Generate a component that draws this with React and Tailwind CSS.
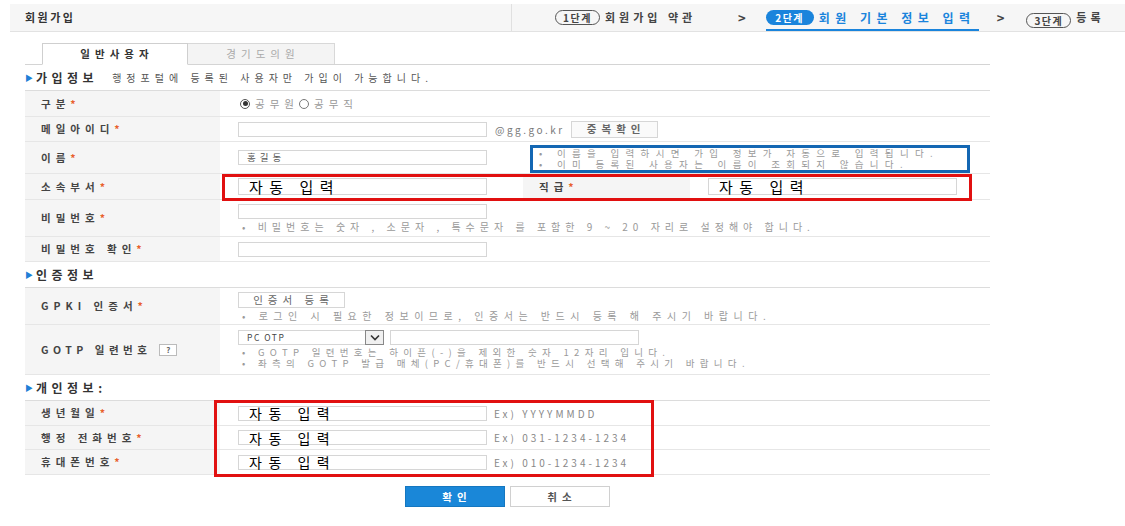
import React from "react";

const F = { fontFamily: '"Noto Sans CJK KR", "Noto Sans", sans-serif' };

function Star() {
  return <span className="text-[#e8602c] tracking-normal">*</span>;
}

function Label({ children, star = true }) {
  return (
    <div className="w-[195px] shrink-0 bg-[#f5f5f5] flex items-center pl-[16px] text-[10.5px] font-bold text-[#444] tracking-[5px]">
      <span>
        {children}
        {star && <Star />}
      </span>
    </div>
  );
}

function Input({ w = "w-[249px]", children }) {
  return (
    <div className={`${w} h-[15px] border border-[#d6d6d6] bg-white flex items-center pl-[8px] text-[9.5px] text-[#555] tracking-[4px]`}>
      {children}
    </div>
  );
}

function BigInput({ size = "text-[15px]", h = "h-[17px]", w = "w-[249px]" }) {
  return (
    <div className={`${w} ${h} border border-[#d6d6d6] bg-white flex items-center pl-[10px] ${size} text-black tracking-[6.5px] leading-none`}>
      자동 입력
    </div>
  );
}

function Hint({ children, t = "tracking-[5px]", s = "text-[10px]" }) {
  return <div className={`${s} text-[#9a9a9a] ${t} leading-[11px] whitespace-nowrap`}>• {children}</div>;
}

function Row({ h, label, star = true, children }) {
  return (
    <div className={`flex border-b border-[#e6e6e6] ${h}`}>
      <Label star={star}>{label}</Label>
      <div className="flex-1 pl-[18px] flex flex-col justify-center">{children}</div>
    </div>
  );
}

function SectionHead({ title, desc }) {
  return (
    <div className="h-[25px] flex items-center">
      <span className="text-[#1f7fd6] text-[8px] mr-[3px]">▶</span>
      <span className="text-[12px] font-bold text-[#333] tracking-[4.5px]">{title}</span>
      {desc && <span className="ml-[14px] text-[10px] text-[#555] tracking-[5px]">{desc}</span>}
    </div>
  );
}

function StepPill({ n, active }) {
  return active ? (
    <span className="inline-flex items-center justify-center w-[48px] h-[15px] rounded-full bg-[#1a84dc] text-white text-[10px] font-bold tracking-[1.5px]">{n}단계</span>
  ) : (
    <span className="inline-flex items-center justify-center w-[45px] h-[15px] rounded-full border border-[#555] text-[#444] text-[10px] font-bold tracking-[1.5px]">{n}단계</span>
  );
}

function Ex({ children }) {
  return <span className="ml-[7px] text-[10px] text-[#888] tracking-[3px]">{children}</span>;
}

export default function App() {
  return (
    <div style={F} className="w-[1125px] h-[526px] bg-white overflow-hidden relative">
      {/* header */}
      <div className="mt-[4px] ml-[10px] h-[28px] bg-[#f6f6f6] border-b border-[#e2e2e2] flex">
        <div className="w-[502px] border-r border-[#e0e0e0] flex items-center pl-[15px] text-[11px] font-bold text-[#333] tracking-[2.5px]">회원가입</div>
        <div className="flex-1 flex items-center pl-[43px] whitespace-nowrap">
          <StepPill n="1" />
          <span className="ml-[5px] w-[90px] text-[11px] font-bold text-[#444] tracking-[4px]">회원가입 약관</span>
          <span className="ml-[43px] text-[13px] font-bold text-[#444]">&gt;</span>
          <div className="ml-[20px] h-full flex items-center border-b-2 border-[#1a84dc] pt-[2px]">
            <StepPill n="2" active />
            <span className="ml-[5px] w-[160px] text-[12px] font-bold text-[#1a84dc] tracking-[5.5px]">회원 기본 정보 입력</span>
          </div>
          <span className="ml-[18px] text-[13px] font-bold text-[#444]">&gt;</span>
          <span className="ml-[22px]"><StepPill n="3" /></span>
          <span className="ml-[5px] text-[11px] font-bold text-[#444] tracking-[4px]">등록</span>
        </div>
      </div>

      <div className="ml-[25px] w-[965px]">
        {/* tabs */}
        <div className="mt-[11px] h-[22px] flex pl-[17px] border-b border-[#d4d4d4]">
          <div className="w-[146px] h-[22px] border border-[#cfcfcf] border-b-white bg-white flex items-center justify-center pl-[4px] text-[10.5px] font-bold text-[#333] tracking-[5px]">일반사용자</div>
          <div className="w-[147px] h-[21px] border-t border-r border-[#d8d8d8] bg-[#f4f4f4] flex items-center justify-center pl-[4px] text-[10.5px] text-[#aaa] tracking-[5px]">경기도의원</div>
        </div>

        <SectionHead title="가입정보" desc="행정포털에 등록된 사용자만 가입이 가능합니다." />
        <div className="border-t border-[#dcdcdc]">
          <Row h="h-[26px]" label="구분">
            <div className="flex items-center text-[10.5px] text-[#999] tracking-[5px]">
              <span className="w-[10px] h-[10px] rounded-full border border-[#555] flex items-center justify-center ml-[2px] mr-[5px]">
                <span className="w-[5px] h-[5px] rounded-full bg-[#333]" />
              </span>
              <span>공무원</span>
              <span className="w-[10px] h-[10px] rounded-full border border-[#777] mr-[5px]" />
              <span>공무직</span>
            </div>
          </Row>
          <Row h="h-[25px]" label="메일아이디">
            <div className="flex items-center">
              <Input />
              <span className="ml-[8px] text-[10px] text-[#777] tracking-[2.5px]">@gg.go.kr</span>
              <div className="ml-[6px] w-[87px] h-[17px] border border-[#d6d6d6] bg-[#fafafa] flex items-center justify-center pl-[4px] text-[10.5px] font-bold text-[#666] tracking-[5px]">중복확인</div>
            </div>
          </Row>
          <Row h="h-[32px]" label="이름">
            <div className="flex items-start h-full pt-[3px]">
              <div className="mt-[5px]"><Input>홍길동</Input></div>
              <div className="ml-[43px] w-[440px] h-[28px] border-[3px] border-[#1467b3] flex flex-col justify-center pl-[6px]">
                <Hint s="text-[9.5px]" t="tracking-[6.3px]">이름을 입력하시면 가입 정보가 자동으로 입력됩니다.</Hint>
                <Hint s="text-[9.5px]" t="tracking-[6.3px]">이미 등록된 사용자는 이름이 조회되지 않습니다.</Hint>
              </div>
            </div>
          </Row>
          <div className="relative flex border-b border-[#e6e6e6] h-[26px]">
            <Label>소속부서</Label>
            <div className="flex-1 pl-[18px] flex items-center">
              <BigInput />
              <div className="ml-[36px] w-[167px] h-full bg-[#f5f5f5] flex items-center pl-[16px] text-[10.5px] font-bold text-[#444] tracking-[5px]">
                <span>직급<Star /></span>
              </div>
              <div className="ml-[18px]"><BigInput /></div>
            </div>
            <div className="absolute left-[197px] top-0 w-[750px] h-[27px] border-[3px] border-[#e11010]" />
          </div>
          <Row h="h-[37px]" label="비밀번호">
            <Input />
            <div className="mt-[2px] pl-[4px]"><Hint>비밀번호는 숫자 , 소문자 , 특수문자 를 포함한 9 ~ 20 자리로 설정해야 합니다.</Hint></div>
          </Row>
          <Row h="h-[25px]" label="비밀번호 확인">
            <Input />
          </Row>
        </div>

        <SectionHead title="인증정보" />
        <div className="border-t border-[#dcdcdc]">
          <Row h="h-[37px]" label="GPKI 인증서">
            <div className="w-[107px] h-[16px] border border-[#d6d6d6] bg-white flex items-center justify-center pl-[4px] text-[10.5px] text-[#666] tracking-[5px]">인증서 등록</div>
            <div className="mt-[2px] pl-[4px]"><Hint t="tracking-[5.5px]">로그인 시 필요한 정보이므로, 인증서는 반드시 등록 해 주시기 바랍니다.</Hint></div>
          </Row>
          <div className="flex border-b border-[#e6e6e6] h-[50px]">
            <div className="w-[195px] shrink-0 bg-[#f5f5f5] flex items-center pl-[16px] text-[10.5px] font-bold text-[#444] tracking-[4.5px]">
              <span>GOTP 일련번호</span>
              <span className="ml-[8px] w-[18px] h-[12px] border border-[#bbb] bg-white flex items-center justify-center text-[8px] font-bold text-[#666] tracking-normal">?</span>
            </div>
            <div className="flex-1 pl-[18px] flex flex-col justify-center">
              <div className="flex items-center">
                <div className="w-[146px] h-[15px] border border-[#d6d6d6] bg-white flex items-center justify-between pl-[8px]">
                  <span className="text-[8.5px] text-[#444] tracking-[1.5px]">PC OTP</span>
                  <span className="w-[19px] h-[15px] border border-[#888] bg-[#f0f0f0] flex items-center justify-center -mr-px">
                    <svg width="10" height="7" viewBox="0 0 10 7"><path d="M1 1.5 L5 5.5 L9 1.5" fill="none" stroke="#333" strokeWidth="1.6" /></svg>
                  </span>
                </div>
                <div className="ml-[6px]"><Input /></div>
              </div>
              <div className="mt-[2px] pl-[4px]">
                <Hint s="text-[9.5px]" t="tracking-[5.3px]">GOTP 일련번호는 하이픈(-)을 제외한 숫자 12자리 입니다.</Hint>
                <Hint s="text-[9.5px]" t="tracking-[5.3px]">좌측의 GOTP 발급 매체(PC/휴대폰)를 반드시 선택해 주시기 바랍니다.</Hint>
              </div>
            </div>
          </div>
        </div>

        <SectionHead title="개인정보:" />
        <div className="relative border-t border-[#dcdcdc]">
          <Row h="h-[25px]" label="생년월일">
            <div className="flex items-center">
              <BigInput size="text-[14px]" h="h-[15px]" />
              <Ex>Ex) YYYYMMDD</Ex>
            </div>
          </Row>
          <Row h="h-[24px]" label="행정 전화번호">
            <div className="flex items-center">
              <BigInput size="text-[14px]" h="h-[15px]" />
              <Ex>Ex) 031-1234-1234</Ex>
            </div>
          </Row>
          <Row h="h-[25px]" label="휴대폰번호">
            <div className="flex items-center">
              <BigInput size="text-[14px]" h="h-[15px]" />
              <Ex>Ex) 010-1234-1234</Ex>
            </div>
          </Row>
          <div className="absolute left-[189px] -top-[1px] w-[440px] h-[77px] border-[3px] border-[#e11010]" />
        </div>

        <div className="mt-[11px] flex justify-center gap-[5px]">
          <div className="w-[100px] h-[21px] bg-[#1a87d8] border border-[#1577c0] flex items-center justify-center pl-[4px] text-[10.5px] font-bold text-white tracking-[5px]">확인</div>
          <div className="w-[100px] h-[21px] bg-white border border-[#d0d0d0] flex items-center justify-center pl-[4px] text-[10.5px] font-bold text-[#555] tracking-[5px]">취소</div>
        </div>
      </div>
    </div>
  );
}
